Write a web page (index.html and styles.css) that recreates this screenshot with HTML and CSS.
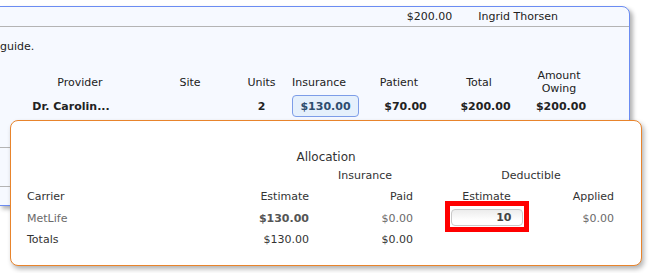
FILE: index.html
```html
<!DOCTYPE html>
<html lang="en">

<head>
  <meta charset="UTF-8">
  <meta name="viewport" content="width=device-width, initial-scale=1.0">
  <title>Claim allocation</title>

  <link rel="stylesheet" href="styles.css">
</head>

<body>

  <div class="page">

    <!-- claim panel behind the popup -->
    <div class="claim-panel">
      <div class="claim-head">
        <span class="head-amount">$200.00</span>
        <span class="head-name">Ingrid Thorsen</span>
      </div>

      <p class="claim-note">guide.</p>

      <div class="proc-grid">
        <div class="proc-col col-provider">Provider</div>
        <div class="proc-col col-site">Site</div>
        <div class="proc-col col-units">Units</div>
        <div class="proc-col col-ins">Insurance</div>
        <div class="proc-col col-patient">Patient</div>
        <div class="proc-col col-total">Total</div>
        <div class="proc-col col-owing">Amount<br>Owing</div>

        <div class="proc-cell col-provider cell-provider">Dr. Carolin...</div>
        <div class="proc-cell col-site"></div>
        <div class="proc-cell col-units">2</div>
        <div class="proc-cell col-ins"><button class="ins-button">$130.00</button></div>
        <div class="proc-cell col-patient cell-shift">$70.00</div>
        <div class="proc-cell col-total cell-shift">$200.00</div>
        <div class="proc-cell col-owing cell-shift-small">$200.00</div>
      </div>

      <div class="claim-rows">
        <div class="claim-row"></div>
        <div class="claim-row"></div>
        <div class="claim-row last"></div>
      </div>
    </div>

    <!-- allocation popup -->
    <div class="alloc-popup">
      <h3 class="alloc-title">Allocation</h3>

      <div class="alloc-grid">
        <div class="group group-ins">Insurance</div>
        <div class="group group-ded">Deductible</div>

        <div class="alloc-head">Carrier</div>
        <div class="alloc-head num">Estimate</div>
        <div class="alloc-head num">Paid</div>
        <div class="alloc-head mid">Estimate</div>
        <div class="alloc-head num">Applied</div>

        <div class="alloc-cell carrier">MetLife</div>
        <div class="alloc-cell num est">$130.00</div>
        <div class="alloc-cell num dim">$0.00</div>
        <div class="alloc-cell mid">
          <span class="highlight"><input class="ded-input" type="text" value="10"></span>
        </div>
        <div class="alloc-cell num dim">$0.00</div>

        <div class="alloc-total">Totals</div>
        <div class="alloc-total num">$130.00</div>
        <div class="alloc-total num">$0.00</div>
        <div class="alloc-total"></div>
        <div class="alloc-total"></div>
      </div>
    </div>

  </div>

</body>

</html>
```

FILE: styles.css
```css
/* 整體頁面 */
body {
  margin: 0;
  font-family: "DejaVu Sans", Verdana, sans-serif;
  font-size: 11px;
  color: #222;
  background: #fff;
}

.page {
  position: relative;
  height: 273px;
  overflow: hidden;
}

/* 背後的藍色面板 */
.claim-panel {
  margin-top: 6px;
  margin-left: -1px;
  width: 629px;
  border: 1px solid #6b8cf2;
  border-top-right-radius: 8px;
  background: #f6f9ff;
  box-shadow: 3px 3px 4px rgba(0, 0, 0, 0.3);
}

.claim-head {
  display: flex;
  justify-content: flex-end;
  gap: 26px;
  height: 19px;
  line-height: 20px;
  padding-right: 71px;
  border-bottom: 1px solid #b4b4b4;
}

.claim-note {
  margin: 13px 0 0;
  line-height: 14px;
}

.proc-grid {
  display: grid;
  grid-template-columns: 20px 120px 100px 43px 79px 74px 86px 74px;
  grid-template-rows: 26px 22px;
  margin-top: 15px;
  align-items: center;
}

.proc-col {
  text-align: center;
  line-height: 13px;
}

.col-provider { grid-column: 2; }
.col-site { grid-column: 3; }
.col-units { grid-column: 4; }
.col-ins { grid-column: 5; text-align: left; padding-left: 9px; }
.col-patient { grid-column: 6; }
.col-total { grid-column: 7; }
.col-owing { grid-column: 8; }

.proc-cell {
  text-align: center;
  font-weight: bold;
}

.proc-cell.col-ins {
  text-align: left;
}

.cell-provider {
  padding-right: 18px;
}

.cell-shift {
  padding-left: 13px;
}

.cell-shift-small {
  padding-left: 4px;
}

.ins-button {
  height: 22px;
  width: 67px;
  padding: 0;
  font: inherit;
  font-weight: bold;
  color: #2e4d6e;
  background: #e5f0fc;
  border: 1px solid #7d9de8;
  border-radius: 4px;
}

.claim-row {
  height: 30px;
  border-bottom: 1px solid #b4b4b4;
}

.claim-row + .claim-row {
  height: 38px;
}

.claim-row.last {
  height: 18px;
  border-bottom: 0;
}

/* 彈出的分配視窗 */
.alloc-popup {
  position: absolute;
  left: 10px;
  top: 120px;
  width: 614px;
  height: 144px;
  padding-left: 16px;
  border: 1px solid #e8842c;
  border-radius: 8px;
  background: #fff;
  box-shadow: 2px 3px 5px rgba(0, 0, 0, 0.3);
  color: #333;
}

.alloc-title {
  margin: 29px 0 0;
  padding-right: 16px;
  font-size: 12px;
  font-weight: normal;
  line-height: 14px;
  text-align: center;
}

.alloc-grid {
  display: grid;
  grid-template-columns: 173px 109px 104px 147px 54px;
  grid-template-rows: 21px 21px 22px 21px;
  margin-top: 1px;
  align-items: center;
}

.group-ins {
  grid-column: 3;
  text-align: center;
  padding-left: 8px;
}

.group-ded {
  grid-column: 4 / 6;
  text-align: center;
  padding-left: 35px;
}

.num {
  text-align: right;
}

.mid {
  text-align: center;
}

.carrier,
.dim {
  color: #6a6a6a;
}

.est {
  font-weight: bold;
  color: #555;
}

/* 紅色框起來的輸入欄 */
.highlight {
  display: inline-block;
  margin-top: -6px;
  margin-bottom: -2px;
  padding: 3px 1px 1px;
  border: 5px solid #ff0000;
  line-height: 0;
}

.ded-input {
  box-sizing: border-box;
  width: 72px;
  height: 17px;
  padding: 0 10px 0 0;
  font: inherit;
  font-weight: bold;
  color: #444;
  text-align: right;
  border: 1px solid #c9c9c9;
  border-radius: 4px;
  background: linear-gradient(to bottom, #ececec, #fff 70%);
}
```
